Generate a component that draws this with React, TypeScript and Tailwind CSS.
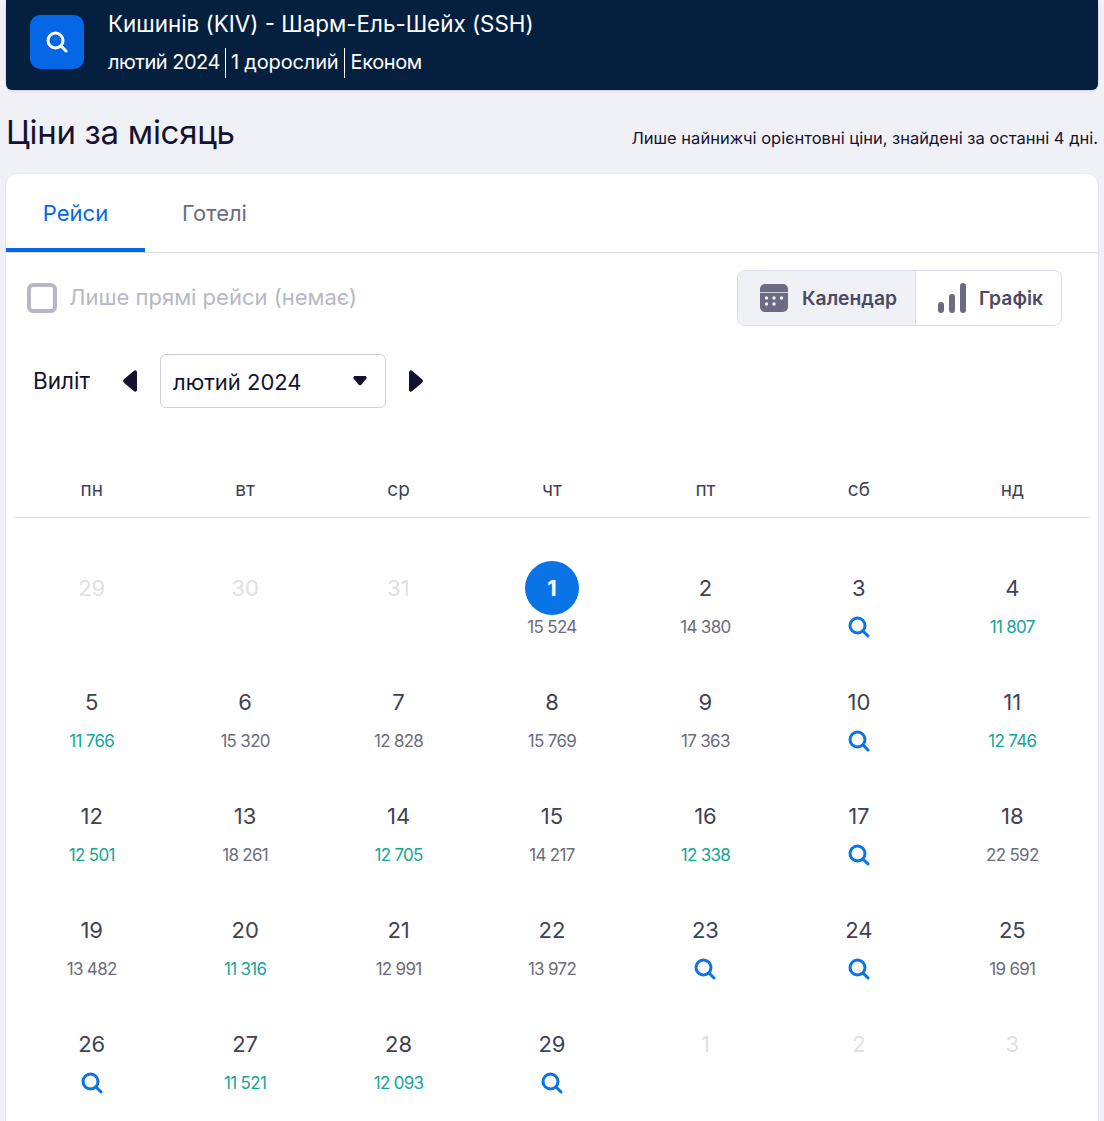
type Day = { d: number; price?: string; cheap?: boolean; muted?: boolean; selected?: boolean };

const weekdays = ["пн", "вт", "ср", "чт", "пт", "сб", "нд"];

const days: Day[] = [
  { d: 29, muted: true },
  { d: 30, muted: true },
  { d: 31, muted: true },
  { d: 1, price: "15 524", selected: true },
  { d: 2, price: "14 380" },
  { d: 3 },
  { d: 4, price: "11 807", cheap: true },
  { d: 5, price: "11 766", cheap: true },
  { d: 6, price: "15 320" },
  { d: 7, price: "12 828" },
  { d: 8, price: "15 769" },
  { d: 9, price: "17 363" },
  { d: 10 },
  { d: 11, price: "12 746", cheap: true },
  { d: 12, price: "12 501", cheap: true },
  { d: 13, price: "18 261" },
  { d: 14, price: "12 705", cheap: true },
  { d: 15, price: "14 217" },
  { d: 16, price: "12 338", cheap: true },
  { d: 17 },
  { d: 18, price: "22 592" },
  { d: 19, price: "13 482" },
  { d: 20, price: "11 316", cheap: true },
  { d: 21, price: "12 991" },
  { d: 22, price: "13 972" },
  { d: 23 },
  { d: 24 },
  { d: 25, price: "19 691" },
  { d: 26 },
  { d: 27, price: "11 521", cheap: true },
  { d: 28, price: "12 093", cheap: true },
  { d: 29 },
  { d: 1, muted: true },
  { d: 2, muted: true },
  { d: 3, muted: true },
];

function SearchIcon({ className }: { className: string }) {
  return (
    <svg width="22" height="22" viewBox="0 0 22 22" fill="none" stroke="currentColor" strokeWidth="3" strokeLinecap="round" className={className}>
      <circle cx="9.500" cy="9.500" r="7.500" />
      <path d="M15.500 15.500 20 20" />
    </svg>
  );
}

function DayCell({ day }: { day: Day }) {
  return (
    <div className="flex h-[114px] flex-col items-center">
      {day.selected ? (
        <div className="flex h-[54px] w-[54px] items-center justify-center rounded-full bg-[#0a73e6] text-[22px] font-bold text-white">
          {day.d}
        </div>
      ) : (
        <div className={`flex h-[54px] items-center text-[22px] ${day.muted ? "text-[#dfe0e6]" : "text-[#3f4254]"}`}>
          {day.d}
        </div>
      )}
      {!day.muted && (
        <div className="mt-px flex h-[24px] items-center">
          {day.price ? (
            <span className={`text-[17px] tracking-[-0.7px] ${day.cheap ? "text-[#14a596]" : "text-[#6b6d7c]"}`}>
              {day.price}
            </span>
          ) : (
            <SearchIcon className="-mt-[2px] text-[#0a73e6]" />
          )}
        </div>
      )}
    </div>
  );
}

export default function App() {
  return (
    <div className="h-[1121px] overflow-hidden bg-[#f0f1f6] px-[6px] font-['Inter',sans-serif] text-[#14132f]">
      <header className="flex h-[90px] items-start rounded-b-md bg-[#05203f] pl-6 text-white shadow">
        <div className="mt-[15px] flex h-[54px] w-[54px] items-center justify-center rounded-[10px] bg-[#0667e6]">
          <SearchIcon className="text-white" />
        </div>
        <div className="ml-6 mt-[10px]">
          <div className="text-[22.400px] leading-7">Кишинів (KIV) - Шарм-Ель-Шейх (SSH)</div>
          <div className="mt-[10px] flex h-[30px] text-[20px] leading-[28px]">
            <span className="pr-[5px] tracking-[-0.5px]">лютий 2024</span>
            <span className="border-l border-white pl-[5px] pr-[5px] tracking-[-0.15px]">1 дорослий</span>
            <span className="border-l border-white pl-[6px] tracking-[-0.4px]">Економ</span>
          </div>
        </div>
      </header>

      <div className="flex h-[84px] items-center justify-between">
        <h1 className="text-[33px] leading-none tracking-[-0.3px] text-[#14132f]">Ціни за місяць</h1>
        <p className="mt-3 text-[16.500px] text-[#14132f]">Лише найнижчі орієнтовні ціни, знайдені за останні 4 дні.</p>
      </div>

      <section className="h-[960px] rounded-t-xl bg-white shadow-sm">
        <div className="flex h-[79px] border-b border-[#dcdde3] text-[22px]">
          <div className="flex w-[139px] items-center justify-center border-b-[4px] border-[#0667e6] pt-1 text-[#0667e6]">Рейси</div>
          <div className="flex w-[139px] items-center justify-center text-[#6b6d7c]">Готелі</div>
        </div>

        <div className="flex items-center justify-between pl-[21px] pr-9 pt-[17px]">
          <label className="flex items-center text-[22px] text-[#b7b8c4]">
            <span className="h-[30px] w-[30px] rounded-md border-[4px] border-[#b7b8c4]" />
            <span className="-mt-[2px] ml-3">Лише прямі рейси (немає)</span>
          </label>
          <div className="flex h-[56px] rounded-lg border border-[#dcdde6] text-[19.300px] font-semibold text-[#4a4b63]">
            <div className="flex w-[178px] items-center gap-[14px] rounded-l-lg border-r border-[#dcdde6] bg-[#f0f1f6] pl-[22px]">
              <svg width="28" height="28" viewBox="0 0 28 28" fill="#6b6c82">
                <path d="M5 0h18a5 5 0 0 1 5 5v3H0V5a5 5 0 0 1 5-5zM0 8.800h28V23a5 5 0 0 1-5 5H5a5 5 0 0 1-5-5V8.800z" />
                <g fill="#f0f1f6">
                  <circle cx="6.500" cy="14" r="1.700" />
                  <circle cx="14" cy="14" r="1.700" />
                  <circle cx="21.500" cy="14" r="1.700" />
                  <circle cx="6.500" cy="20" r="1.700" />
                  <circle cx="14" cy="20" r="1.700" />
                </g>
              </svg>
              Календар
            </div>
            <div className="flex w-[145px] items-center gap-[13px] pl-[22px]">
              <svg width="28" height="30" viewBox="0 0 28 30" fill="#6b6c82">
                <rect x="0" y="19" width="6" height="11" rx="3" />
                <rect x="11" y="11" width="6" height="19" rx="3" />
                <rect x="22" y="0" width="6" height="30" rx="3" />
              </svg>
              Графік
            </div>
          </div>
        </div>

        <div className="flex items-center pl-[27px] pt-7">
          <span className="w-[90px] text-[22.500px]">Виліт</span>
          <svg width="14" height="22" viewBox="0 0 14 22" fill="#14132f">
            <path d="M14 2v18a1.800 1.800 0 0 1-3 1.300L1.200 13a2.700 2.700 0 0 1 0-4L11 .7A1.800 1.800 0 0 1 14 2z" />
          </svg>
          <div className="ml-[23px] flex h-[54px] w-[226px] items-center justify-between rounded-md border border-[#cfd0da] pl-3 pr-[18px] text-[22px]">
            <span className="pt-[2px]">лютий 2024</span>
            <svg width="14" height="10" viewBox="0 0 14 10" fill="#14132f">
              <path d="M2 0h10a1.700 1.700 0 0 1 1.300 2.800L8.500 8.500a2 2 0 0 1-3 0L.7 2.800A1.700 1.700 0 0 1 2 0z" />
            </svg>
          </div>
          <svg className="ml-[23px]" width="14" height="22" viewBox="0 0 14 22" fill="#14132f">
            <path d="M0 2v18a1.800 1.800 0 0 0 3 1.300L12.800 13a2.700 2.700 0 0 0 0-4L3 .7A1.800 1.800 0 0 0 0 2z" />
          </svg>
        </div>

        <div className="mx-[9px] mt-[55px] grid h-[55px] grid-cols-7 items-center border-b border-[#dcdde3] text-center text-[19px] text-[#3f4254]">
          {weekdays.map((w) => (
            <div key={w}>{w}</div>
          ))}
        </div>

        <div className="mx-[9px] mt-[43px] grid grid-cols-7">
          {days.map((day, i) => (
            <DayCell key={i} day={day} />
          ))}
        </div>
      </section>
    </div>
  );
}
